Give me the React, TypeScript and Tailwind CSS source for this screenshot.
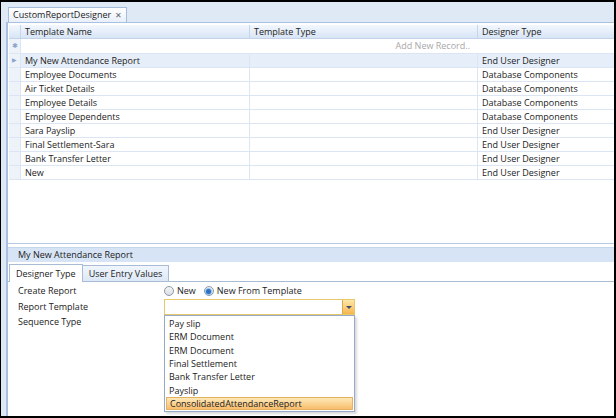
import React from "react";

const rows = [
  { name: "My New Attendance Report", type: "", designer: "End User Designer", current: true },
  { name: "Employee Documents", type: "", designer: "Database Components" },
  { name: "Air Ticket Details", type: "", designer: "Database Components" },
  { name: "Employee Details", type: "", designer: "Database Components" },
  { name: "Employee Dependents", type: "", designer: "Database Components" },
  { name: "Sara Payslip", type: "", designer: "End User Designer" },
  { name: "Final Settlement-Sara", type: "", designer: "End User Designer" },
  { name: "Bank Transfer Letter", type: "", designer: "End User Designer" },
  { name: "New", type: "", designer: "End User Designer" },
];

const templates = [
  "Pay slip",
  "ERM Document",
  "ERM Document",
  "Final Settlement",
  "Bank Transfer Letter",
  "Payslip",
  "ConsolidatedAttendanceReport",
];

const Radio = ({ checked }: { checked?: boolean }) => (
  <span className="w-[10px] h-[10px] rounded-full border border-[#8d98a8] bg-gradient-to-b from-[#f4f4f4] to-[#d9dde3] flex items-center justify-center">
    {checked && <span className="w-[5px] h-[5px] rounded-full bg-[#2f6fbf] shadow-[0_0_1px_1px_#8ec0f0]" />}
  </span>
);

export default function App() {
  return (
    <div
      className="w-[616px] h-[418px] overflow-hidden border-t-2 border-r-2 border-b-2 border-l border-black bg-[#dfe9f6] flex flex-col text-[9px] text-[#222]"
      style={{ fontFamily: '"Open Sans", "Noto Sans", sans-serif' }}
    >
      {/* document tab strip */}
      <div className="h-[20px] shrink-0 flex items-end pl-[7px]">
        <div className="h-[15px] px-[4px] flex items-center gap-[4px] bg-gradient-to-b from-[#ffffff] to-[#e9f0fa] border border-b-0 border-[#a7bcd9]">
          <span>CustomReportDesigner</span>
          <span className="text-[#666] text-[8px]">✕</span>
        </div>
      </div>

      {/* main panel */}
      <div className="flex-1 flex flex-col ml-[5px] border-l-2 border-t border-[#a9c0e0] bg-white">
        {/* grid */}
        <div className="flex-1 flex flex-col border-b border-[#b6c9e4] pt-[2px] pl-[1px]">
          <div className="flex h-[14px] bg-gradient-to-b from-[#f3f7fd] to-[#d8e5f6] border-b border-[#c2d3ea]">
            <div className="w-[12px] border-r border-[#c5d5ec]" />
            <div className="w-[229px] pl-[4px] flex items-center border-r border-[#c5d5ec]">Template Name</div>
            <div className="w-[228px] pl-[4px] flex items-center border-r border-[#c5d5ec]">Template Type</div>
            <div className="flex-1 pl-[4px] flex items-center">Designer Type</div>
          </div>
          <div className="flex h-[15px] border-b border-[#dbe5f3]">
            <div className="w-[12px] border-r border-[#dbe5f3] bg-[#eef3fa] flex items-center justify-center text-[#8aa4cc] text-[7px]">✱</div>
            <div className="w-[457px] flex items-center justify-end pr-[8px] text-[#a8a8a8]">Add New Record..</div>
            <div className="flex-1" />
          </div>
          {rows.map((r, i) => (
            <div
              key={i}
              className={`flex h-[14px] border-b border-[#dbe5f3] ${r.current ? "bg-[#e6eef9]" : ""}`}
            >
              <div className="w-[12px] border-r border-[#dbe5f3] bg-[#eef3fa] flex items-center justify-center">
                {r.current && <span className="text-[#8aa4cc] text-[6px]">▶</span>}
              </div>
              <div className="w-[229px] pl-[4px] flex items-center border-r border-[#dbe5f3]">{r.name}</div>
              <div className="w-[228px] pl-[4px] flex items-center border-r border-[#dbe5f3]">{r.type}</div>
              <div className="flex-1 pl-[4px] flex items-center">{r.designer}</div>
            </div>
          ))}
        </div>

        {/* detail panel */}
        <div className="h-[172px] shrink-0 flex flex-col pt-[3px] bg-white">
          <div className="h-[15px] bg-[#d7e4f5] border-t border-[#c5d6ec] flex items-center pl-[10px]">
            My New Attendance Report
          </div>
          <div className="h-[19px] flex items-end pl-[1px] mt-[1px] border-b border-[#a9bcd6]">
            <div className="h-[18px] px-[6px] flex items-center bg-white border border-b-0 border-[#a9bcd6] relative top-[1px]">
              Designer Type
            </div>
            <div className="h-[16px] px-[6px] flex items-center bg-gradient-to-b from-[#f1f6fd] to-[#dde8f6] border border-l-0 border-b-0 border-[#a9bcd6]">
              User Entry Values
            </div>
          </div>
          <div className="flex-1 flex pl-[10px] pt-[1px]">
            <div className="w-[146px] flex flex-col">
              <div className="h-[16px] flex items-center">Create Report</div>
              <div className="h-[15px] flex items-center">Report Template</div>
              <div className="h-[15px] flex items-center">Sequence Type</div>
            </div>
            <div className="flex flex-col">
              <div className="h-[16px] flex items-center gap-[3px]">
                <Radio />
                <span className="mr-[5px]">New</span>
                <Radio checked />
                <span>New From Template</span>
              </div>
              <div className="relative">
                <div className="w-[191px] h-[16px] border border-[#e8c86a] bg-white flex justify-end">
                  <div className="w-[12px] h-full bg-gradient-to-b from-[#fde7a8] to-[#f7b54c] border-l border-[#d9a94a] flex items-center justify-center">
                    <span className="w-0 h-0 border-l-[3px] border-r-[3px] border-t-[3px] border-l-transparent border-r-transparent border-t-[#3b4e6e]" />
                  </div>
                </div>
                <div className="absolute left-0 top-[16px] w-[191px] bg-white border border-[#95a9c8] shadow-[2px_2px_2px_rgba(0,0,0,0.15)] flex flex-col p-[1px]">
                  {templates.map((t, i) => (
                    <div
                      key={i}
                      className={`h-[13.33px] flex items-center pl-[3px] ${
                        i === templates.length - 1
                          ? "bg-gradient-to-b from-[#fde8b8] to-[#f8bd6a] border border-[#e4b062]"
                          : ""
                      }`}
                    >
                      {t}
                    </div>
                  ))}
                </div>
              </div>
            </div>
          </div>
        </div>
      </div>
    </div>
  );
}
